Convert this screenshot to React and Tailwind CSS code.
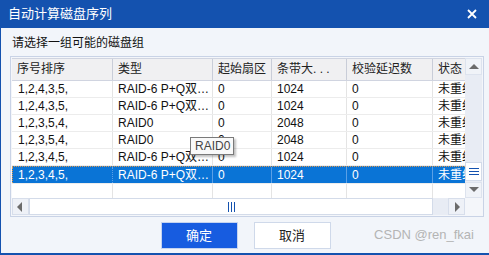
import React from 'react';

const FONT = { fontFamily: '"Liberation Sans", "Noto Sans CJK SC", sans-serif' };

const cols = [
  { title: '序号排序', w: 'w-[101px]' },
  { title: '类型', w: 'w-[100px]' },
  { title: '起始扇区', w: 'w-[59px]' },
  { title: '条带大. . .', w: 'w-[75px]' },
  { title: '校验延迟数', w: 'w-[86px]' },
  { title: '状态', w: 'w-[70px]' },
];

const rows = [
  ['1,2,4,3,5,', 'RAID-6 P+Q双…', '0', '1024', '0', '未重组'],
  ['1,2,4,3,5,', 'RAID-6 P+Q双…', '0', '1024', '0', '未重组'],
  ['1,2,3,5,4,', 'RAID0', '0', '2048', '0', '未重组'],
  ['1,2,3,5,4,', 'RAID0', '0', '2048', '0', '未重组'],
  ['1,2,3,4,5,', 'RAID-6 P+Q双…', '0', '1024', '0', '未重组'],
  ['1,2,3,4,5,', 'RAID-6 P+Q双…', '0', '1024', '0', '未重组'],
];

const Tri = ({ dir }) => {
  const pts = {
    up: '1,8 6,3 11,8',
    down: '1,3 6,8 11,3',
    left: '7,1 2,6 7,11',
    right: '4,1 9,6 4,11',
  }[dir];
  return (
    <svg width="12" height="12" viewBox="0 0 12 12">
      <polygon points={pts} fill="#6b6b6b" />
    </svg>
  );
};

export default function App() {
  return (
    <div className="w-[489px] h-[255px] flex flex-col border-l border-b-2 border-[#1452af] bg-[#f2f5fa] relative overflow-hidden" style={FONT}>
      <div className="h-[28px] shrink-0 bg-[#1452af] flex items-center justify-between pl-[7px] pr-[12px] text-white text-[13px]">
        <span>自动计算磁盘序列</span>
        <svg width="10" height="10" viewBox="0 0 10 10">
          <path d="M1 1L9 9M9 1L1 9" stroke="white" strokeWidth="1.8" />
        </svg>
      </div>

      <div className="pl-[11px] mt-[6px] h-[18px] leading-[18px] text-[12px] text-[#111]">请选择一组可能的磁盘组</div>

      <div className="ml-[9px] mt-[4px] w-[474px] border border-[#c9d3e6] p-px bg-[#f4f6fa]">
        <div className="flex">
          <div className="w-[453px] h-[140px] overflow-hidden bg-white">
            <div className="flex h-[23px] bg-[#f0f0f2] border-y border-[#d0d4e0]">
              {cols.map((c, i) => (
                <div key={i} className={`${c.w} shrink-0 border-r border-[#c9cdd8] pl-[5px] text-[12px] text-[#222] leading-[21px] whitespace-nowrap overflow-hidden`}>
                  {c.title}
                </div>
              ))}
            </div>
            {rows.map((r, ri) => {
              const sel = ri === 5;
              return (
                <div
                  key={ri}
                  className={`flex h-[17px] ${sel ? 'bg-[#0a74d6] text-white border-t border-dotted border-[#d99a55]' : 'text-[#111] border-b border-[#ececec]'}`}
                >
                  {r.map((v, ci) => (
                    <div
                      key={ci}
                      className={`${cols[ci].w} shrink-0 border-r ${sel ? 'border-[#5aa0e6]' : 'border-[#e4e4e4]'} ${sel && ci === 0 ? 'border-l border-l-[#d99a55] border-dotted pl-[5px]' : ci === 0 ? 'pl-[6px]' : 'pl-[5px]'} text-[12px] leading-[16px] whitespace-nowrap overflow-hidden`}
                    >
                      {v}
                    </div>
                  ))}
                </div>
              );
            })}
            <div className="flex h-[16px] border-t border-[#ececec]">
              {cols.map((c, i) => (
                <div key={i} className={`${c.w} shrink-0 border-r border-[#e4e4e4]`} />
              ))}
            </div>
          </div>

          <div className="w-[17px] h-[140px] flex flex-col bg-[#e8ecf4]">
            <div className="h-[17px] flex items-center justify-center bg-[#f0f3f8] border border-[#dde3ee]">
              <Tri dir="up" />
            </div>
            <div className="flex-1" />
            <div className="h-[19px] mb-px flex flex-col items-center justify-center gap-[2px] bg-white border border-[#d3dbe9]">
              <div className="w-[10px] h-px bg-[#1452af]" />
              <div className="w-[10px] h-px bg-[#1452af]" />
              <div className="w-[10px] h-px bg-[#1452af]" />
            </div>
            <div className="h-[16px] flex items-center justify-center bg-[#f0f3f8] border border-[#dde3ee]">
              <Tri dir="down" />
            </div>
          </div>
        </div>

        <div className="flex h-[17px]">
          <div className="w-[17px] flex items-center justify-center bg-[#eef1f7] border border-[#d7deeb]">
            <Tri dir="left" />
          </div>
          <div className="w-[404px] flex items-center justify-center gap-[2px] bg-white border border-[#d3dbe9]">
            <div className="w-px h-[10px] bg-[#1452af]" />
            <div className="w-px h-[10px] bg-[#1452af]" />
            <div className="w-px h-[10px] bg-[#1452af]" />
          </div>
          <div className="w-[15px] bg-[#e8ecf4]" />
          <div className="w-[17px] flex items-center justify-center bg-[#eef1f7] border border-[#d7deeb]">
            <Tri dir="right" />
          </div>
          <div className="w-[17px] bg-[#f4f6fa]" />
        </div>
      </div>

      <div className="mt-[5px] flex justify-center gap-[16px] pl-px">
        <button className="w-[77px] h-[27px] bg-[#175ce0] border border-[#c5d4f0] text-white text-[13px]">确定</button>
        <button className="w-[77px] h-[27px] bg-white border border-[#cfd9ea] text-[#222] text-[13px]">取消</button>
      </div>

      <div className="absolute right-[15px] bottom-[9px] text-[13px] text-[#b4b4b4]" style={{ fontFamily: '"Liberation Sans", sans-serif' }}>
        CSDN @ren_fkai
      </div>

      <div className="absolute left-[189px] top-[137px] w-[44px] h-[18px] bg-[#f9f9f9] border border-[#7a7a7a] shadow-[2px_2px_2px_rgba(0,0,0,0.25)] text-[12px] leading-[16px] text-[#444] pl-[4px]">
        RAID0
      </div>
    </div>
  );
}
